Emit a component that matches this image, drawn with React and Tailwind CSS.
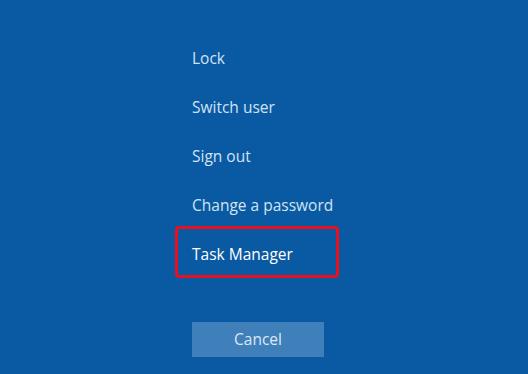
import React from "react";

const items = ["Lock", "Switch user", "Sign out", "Change a password"];

export default function App() {
  return (
    <div
      className="w-[528px] h-[374px] bg-[#0a5aa3] overflow-hidden"
      style={{ fontFamily: '"Open Sans", "Noto Sans", sans-serif' }}
    >
      <div className="pl-[192px] pt-[34px] flex flex-col">
        {items.map((t) => (
          <div key={t} className="h-[49px] flex items-center text-[15.5px] text-[#d3e3f3]">
            {t}
          </div>
        ))}

        {/* highlighted entry */}
        <div className="relative h-[49px] flex items-center text-[15.5px] text-white">
          Task Manager
          <span className="absolute -left-[17px] top-[-4px] w-[164px] h-[52px] border-[3px] border-[#e8101c] rounded-[4px]" />
        </div>

        <button className="mt-[43px] w-[132px] h-[35px] bg-[#4080ba] text-[15.5px] text-[#dce8f5]">
          Cancel
        </button>
      </div>
    </div>
  );
}
